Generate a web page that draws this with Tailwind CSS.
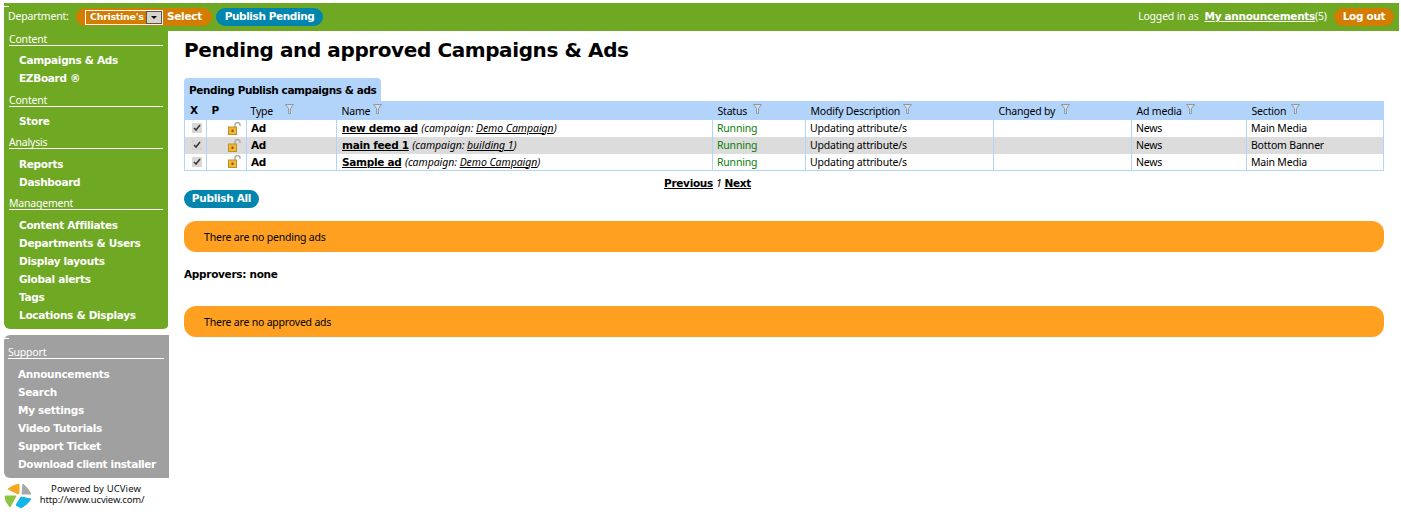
<!DOCTYPE html>
<html lang="en">
<head>
  <meta charset="UTF-8" />
  <title>Pending and approved Campaigns & Ads</title>
  <script src="https://cdn.jsdelivr.net/npm/@tailwindcss/browser@4"></script>
</head>
<body class="bg-white font-['DejaVu_Sans',sans-serif] text-[10.5px] tracking-[-0.3px] text-black">
<div class="w-[1401px] h-[521px] overflow-hidden pt-[3px] pl-[4px]">

  <!-- top bar -->
  <header class="relative h-[28px] w-[1395px] bg-[#6fa823] flex items-center text-white pl-[4px] pr-[5px]">
    <span class="absolute left-0 top-[3px] w-[5px] h-px bg-white"></span>
    <span class="w-[68px] font-['Noto_Sans',sans-serif] text-[10.5px] tracking-[-0.2px]">Department:</span>
    <div class="flex items-center h-[18px] w-[136px] rounded-full bg-[#d27c00] pl-[9px]">
      <div class="flex items-center justify-between w-[78px] h-[15px] border border-white pl-[4px] font-bold text-[9.5px] leading-none">
        <span>Christine's</span>
        <span class="w-[16px] h-[13px] bg-[#d8d4cc] border border-[#555] flex items-center justify-center">
          <span class="w-0 h-0 border-x-[3px] border-x-transparent border-t-[3px] border-t-black"></span>
        </span>
      </div>
      <span class="font-bold ml-[4px]">Select</span>
    </div>
    <div class="flex items-center justify-center h-[18px] w-[107px] ml-[4px] rounded-full bg-[#0085ae] font-bold tracking-[-0.4px]">Publish Pending</div>
    <div class="ml-auto flex items-center">
      <span class="font-['Noto_Sans',sans-serif] text-[10.5px] tracking-[-0.2px] mr-[6px]">Logged in as</span>
      <a class="font-bold underline">My announcements</a><span class="w-[14px] font-['Noto_Sans',sans-serif] text-[10.5px] tracking-[-0.2px]">(5)</span>
      <div class="flex items-center justify-center h-[18px] w-[60px] ml-[5px] rounded-full bg-[#d27c00] font-bold">Log out</div>
    </div>
  </header>

  <div class="flex items-start">
    <!-- sidebar -->
    <aside class="w-[166px] shrink-0">
      <nav class="relative h-[298px] w-[165px] bg-[#6fa823] rounded-b-md text-white pl-[5px] pr-[6px] pt-[1px]">
        <span class="absolute right-0 top-0 bottom-[4px] w-px bg-white"></span>
        <h3 class="h-[14px] font-['Noto_Sans',sans-serif] font-normal text-[10.5px] tracking-[-0.2px] leading-[15px] border-b border-white">Content</h3>
        <ul class="font-bold pl-[10px] pt-[5px] leading-[18px]">
          <li>Campaigns &amp; Ads</li>
          <li>EZBoard ®</li>
        </ul>
        <h3 class="h-[14px] font-['Noto_Sans',sans-serif] font-normal text-[10.5px] tracking-[-0.2px] leading-[15px] border-b border-white mt-[6px]">Content</h3>
        <ul class="font-bold pl-[10px] pt-[5px] leading-[18px]">
          <li>Store</li>
        </ul>
        <h3 class="h-[14px] font-['Noto_Sans',sans-serif] font-normal text-[10.5px] tracking-[-0.2px] leading-[15px] border-b border-white mt-[5px]">Analysis</h3>
        <ul class="font-bold pl-[10px] pt-[6px] leading-[18px]">
          <li>Reports</li>
          <li>Dashboard</li>
        </ul>
        <h3 class="h-[14px] font-['Noto_Sans',sans-serif] font-normal text-[10.5px] tracking-[-0.2px] leading-[15px] border-b border-white mt-[5px]">Management</h3>
        <ul class="font-bold pl-[10px] pt-[6px] leading-[18px]">
          <li>Content Affiliates</li>
          <li>Departments &amp; Users</li>
          <li>Display layouts</li>
          <li>Global alerts</li>
          <li>Tags</li>
          <li>Locations &amp; Displays</li>
        </ul>
      </nav>

      <nav class="relative mt-[6px] h-[143px] w-[165px] bg-[#a0a0a0] rounded-l-md text-white pl-[4px] pr-[5px] pt-[10px]">
        <span class="absolute left-0 top-[3px] w-[5px] h-px bg-white"></span>
        <h3 class="h-[14px] font-['Noto_Sans',sans-serif] font-normal text-[10.5px] tracking-[-0.2px] leading-[15px] border-b border-white">Support</h3>
        <ul class="font-bold pl-[10px] pt-[6px] leading-[18px] whitespace-nowrap">
          <li>Announcements</li>
          <li>Search</li>
          <li>My settings</li>
          <li>Video Tutorials</li>
          <li>Support Ticket</li>
          <li class="tracking-[-0.4px]">Download client installer</li>
        </ul>
      </nav>

      <div class="flex items-start mt-[5px]">
        <svg width="29" height="26" viewBox="0 0 29 26" class="shrink-0">
          <path d="M4 6 Q9 2 15 1 L15 10 Q15 11 14 11 Z" fill="#f7a823" stroke="#f7a823" stroke-linejoin="round"/>
          <path d="M19 1 Q24 5 27 11 L18 11 Z" fill="#a8a8a8" stroke="#a8a8a8" stroke-linejoin="round"/>
          <path d="M1 13 L12 13 L6 24 Q1 19 1 13 Z" fill="#8cc63f" stroke="#8cc63f" stroke-linejoin="round"/>
          <path d="M17 14 L27 16 Q24 21 17 25 L12 22 Z" fill="#12b5ea" stroke="#12b5ea" stroke-linejoin="round"/>
        </svg>
        <div class="w-[106px] ml-[6px] font-['Noto_Sans',sans-serif] text-[9.5px] tracking-[-0.15px] leading-[10.5px] text-center text-[#111] whitespace-nowrap pt-[1px]">
          <div class="pl-[8px] tracking-[0.1px]">Powered by UCView</div>
          <div>http://www.ucview.com/</div>
        </div>
      </div>
    </aside>

    <!-- content -->
    <main class="w-[1214px] ml-[14px]">
      <h1 class="font-bold text-[20px] tracking-[-0.4px] leading-[28px] mt-[5px] whitespace-nowrap">Pending and approved Campaigns &amp; Ads</h1>

      <div class="mt-[14px] w-[197px] h-[23px] bg-[#b3d4fa] rounded-t-[4px] flex items-end pl-[5px] pb-[6px] font-bold tracking-[-0.42px] leading-none whitespace-nowrap">Pending Publish campaigns &amp; ads</div>

      <table class="w-[1199px] table-fixed border-collapse font-['Noto_Sans',sans-serif] text-[10.5px] tracking-[-0.2px] leading-none border border-[#b3d4fa]">
        <colgroup>
          <col class="w-[22px]"/><col class="w-[40px]"/><col class="w-[90px]"/><col class="w-[376px]"/><col class="w-[93px]"/><col class="w-[188px]"/><col class="w-[138px]"/><col class="w-[115px]"/><col class="w-[137px]"/>
        </colgroup>
        <thead>
          <tr class="h-[18px] bg-[#b3d4fa] text-left">
            <th class="pl-[5px] pb-[2px] font-['DejaVu_Sans',sans-serif] tracking-[-0.3px] font-bold">X</th>
            <th class="pl-[5px] pb-[2px] font-['DejaVu_Sans',sans-serif] tracking-[-0.3px] font-bold">P</th>
            <th class="pl-[4px] pb-[2px] font-normal">Type <svg class="inline ml-[9px] align-[1px]" width="9" height="10" viewBox="0 0 9 10"><path d="M0.5 0.5H8.5L5.5 4.5V9.5H3.5V4.5Z" fill="#d5dde5" stroke="#8d9aa5"/></svg></th>
            <th class="pl-[5px] pb-[2px] font-normal">Name <svg class="inline align-[1px]" width="9" height="10" viewBox="0 0 9 10"><path d="M0.5 0.5H8.5L5.5 4.5V9.5H3.5V4.5Z" fill="#d5dde5" stroke="#8d9aa5"/></svg></th>
            <th class="pl-[5px] pb-[2px] font-normal">Status <svg class="inline ml-[3px] align-[1px]" width="9" height="10" viewBox="0 0 9 10"><path d="M0.5 0.5H8.5L5.5 4.5V9.5H3.5V4.5Z" fill="#d5dde5" stroke="#8d9aa5"/></svg></th>
            <th class="pl-[5px] pb-[2px] font-normal">Modify Description <svg class="inline align-[1px]" width="9" height="10" viewBox="0 0 9 10"><path d="M0.5 0.5H8.5L5.5 4.5V9.5H3.5V4.5Z" fill="#d5dde5" stroke="#8d9aa5"/></svg></th>
            <th class="pl-[5px] pb-[2px] font-normal">Changed by <svg class="inline ml-[3px] align-[1px]" width="9" height="10" viewBox="0 0 9 10"><path d="M0.5 0.5H8.5L5.5 4.5V9.5H3.5V4.5Z" fill="#d5dde5" stroke="#8d9aa5"/></svg></th>
            <th class="pl-[5px] pb-[2px] font-normal">Ad media <svg class="inline ml-[2px] align-[1px]" width="9" height="10" viewBox="0 0 9 10"><path d="M0.5 0.5H8.5L5.5 4.5V9.5H3.5V4.5Z" fill="#d5dde5" stroke="#8d9aa5"/></svg></th>
            <th class="pl-[5px] pb-[2px] font-normal">Section <svg class="inline ml-[2px] align-[1px]" width="9" height="10" viewBox="0 0 9 10"><path d="M0.5 0.5H8.5L5.5 4.5V9.5H3.5V4.5Z" fill="#d5dde5" stroke="#8d9aa5"/></svg></th>
          </tr>
        </thead>
        <tbody>
          <tr class="h-[17px]">
            <td class="border-x border-[#b3d4fa] pl-[7px]"><input type="checkbox" checked class="block w-[10px] h-[10px] accent-[#d8d8d8]"/></td>
            <td class="border-x border-[#b3d4fa] pl-[21px]"><svg width="13" height="13" viewBox="0 0 13 13"><path d="M7 5V3a2.5 2.5 0 0 1 5 0v1" fill="none" stroke="#aaa" stroke-width="1.4"/><rect x="0.5" y="5" width="8" height="7.5" fill="#eeb83a" stroke="#c58f1c"/><rect x="3.5" y="7.5" width="2" height="2.5" fill="#8a5a10"/></svg></td>
            <td class="border-x border-[#b3d4fa] pl-[4px] font-['DejaVu_Sans',sans-serif] tracking-[-0.3px] font-bold">Ad</td>
            <td class="border-x border-[#b3d4fa] pl-[5px] whitespace-nowrap"><a class="font-['DejaVu_Sans',sans-serif] tracking-[-0.3px] font-bold underline">new demo ad</a> <i class="ml-[1px] tracking-[-0.05px]">(campaign: <a class="underline">Demo Campaign</a>)</i></td>
            <td class="border-x border-[#b3d4fa] pl-[4px] text-[#0a7d0a]">Running</td>
            <td class="border-x border-[#b3d4fa] pl-[4px]">Updating attribute/s</td>
            <td class="border-x border-[#b3d4fa] pl-[4px]"></td>
            <td class="border-x border-[#b3d4fa] pl-[4px]">News</td>
            <td class="border-x border-[#b3d4fa] pl-[4px]">Main Media</td>
          </tr>
          <tr class="h-[17px] bg-[#dcdcdc]">
            <td class="border-x border-[#b3d4fa] pl-[7px]"><input type="checkbox" checked class="block w-[10px] h-[10px] accent-[#d8d8d8]"/></td>
            <td class="border-x border-[#b3d4fa] pl-[21px]"><svg width="13" height="13" viewBox="0 0 13 13"><path d="M7 5V3a2.5 2.5 0 0 1 5 0v1" fill="none" stroke="#aaa" stroke-width="1.4"/><rect x="0.5" y="5" width="8" height="7.5" fill="#eeb83a" stroke="#c58f1c"/><rect x="3.5" y="7.5" width="2" height="2.5" fill="#8a5a10"/></svg></td>
            <td class="border-x border-[#b3d4fa] pl-[4px] font-['DejaVu_Sans',sans-serif] tracking-[-0.3px] font-bold">Ad</td>
            <td class="border-x border-[#b3d4fa] pl-[5px] whitespace-nowrap"><a class="font-['DejaVu_Sans',sans-serif] tracking-[-0.3px] font-bold underline">main feed 1</a> <i class="ml-[1px] tracking-[-0.05px]">(campaign: <a class="underline">building 1</a>)</i></td>
            <td class="border-x border-[#b3d4fa] pl-[4px] text-[#0a7d0a]">Running</td>
            <td class="border-x border-[#b3d4fa] pl-[4px]">Updating attribute/s</td>
            <td class="border-x border-[#b3d4fa] pl-[4px]"></td>
            <td class="border-x border-[#b3d4fa] pl-[4px]">News</td>
            <td class="border-x border-[#b3d4fa] pl-[4px]">Bottom Banner</td>
          </tr>
          <tr class="h-[17px]">
            <td class="border-x border-[#b3d4fa] pl-[7px]"><input type="checkbox" checked class="block w-[10px] h-[10px] accent-[#d8d8d8]"/></td>
            <td class="border-x border-[#b3d4fa] pl-[21px]"><svg width="13" height="13" viewBox="0 0 13 13"><path d="M7 5V3a2.5 2.5 0 0 1 5 0v1" fill="none" stroke="#aaa" stroke-width="1.4"/><rect x="0.5" y="5" width="8" height="7.5" fill="#eeb83a" stroke="#c58f1c"/><rect x="3.5" y="7.5" width="2" height="2.5" fill="#8a5a10"/></svg></td>
            <td class="border-x border-[#b3d4fa] pl-[4px] font-['DejaVu_Sans',sans-serif] tracking-[-0.3px] font-bold">Ad</td>
            <td class="border-x border-[#b3d4fa] pl-[5px] whitespace-nowrap"><a class="font-['DejaVu_Sans',sans-serif] tracking-[-0.3px] font-bold underline">Sample ad</a> <i class="ml-[1px] tracking-[-0.05px]">(campaign: <a class="underline">Demo Campaign</a>)</i></td>
            <td class="border-x border-[#b3d4fa] pl-[4px] text-[#0a7d0a]">Running</td>
            <td class="border-x border-[#b3d4fa] pl-[4px]">Updating attribute/s</td>
            <td class="border-x border-[#b3d4fa] pl-[4px]"></td>
            <td class="border-x border-[#b3d4fa] pl-[4px]">News</td>
            <td class="border-x border-[#b3d4fa] pl-[4px]">Main Media</td>
          </tr>
        </tbody>
      </table>

      <div class="flex items-center h-[14px] mt-[6px] ml-[480px] font-bold whitespace-nowrap">
        <a class="underline">Previous</a><i class="font-['Noto_Sans',sans-serif] font-normal mx-[3px]">1</i><a class="underline">Next</a>
      </div>

      <div class="flex items-center justify-center w-[75px] h-[18px] mt-[-1px] rounded-full bg-[#0085ae] text-white font-bold">Publish All</div>

      <div class="w-[1200px] h-[31px] mt-[13px] pt-[2px] rounded-xl bg-[#ffa020] flex items-center pl-[20px] font-['Noto_Sans',sans-serif] text-[10.5px] tracking-[-0.2px]">There are no pending ads</div>
      <p class="font-bold mt-[15px] leading-[14px]">Approvers: none</p>
      <div class="w-[1200px] h-[31px] mt-[25px] pt-[2px] rounded-xl bg-[#ffa020] flex items-center pl-[20px] font-['Noto_Sans',sans-serif] text-[10.5px] tracking-[-0.2px]">There are no approved ads</div>
    </main>
  </div>
</div>
</body>
</html>
